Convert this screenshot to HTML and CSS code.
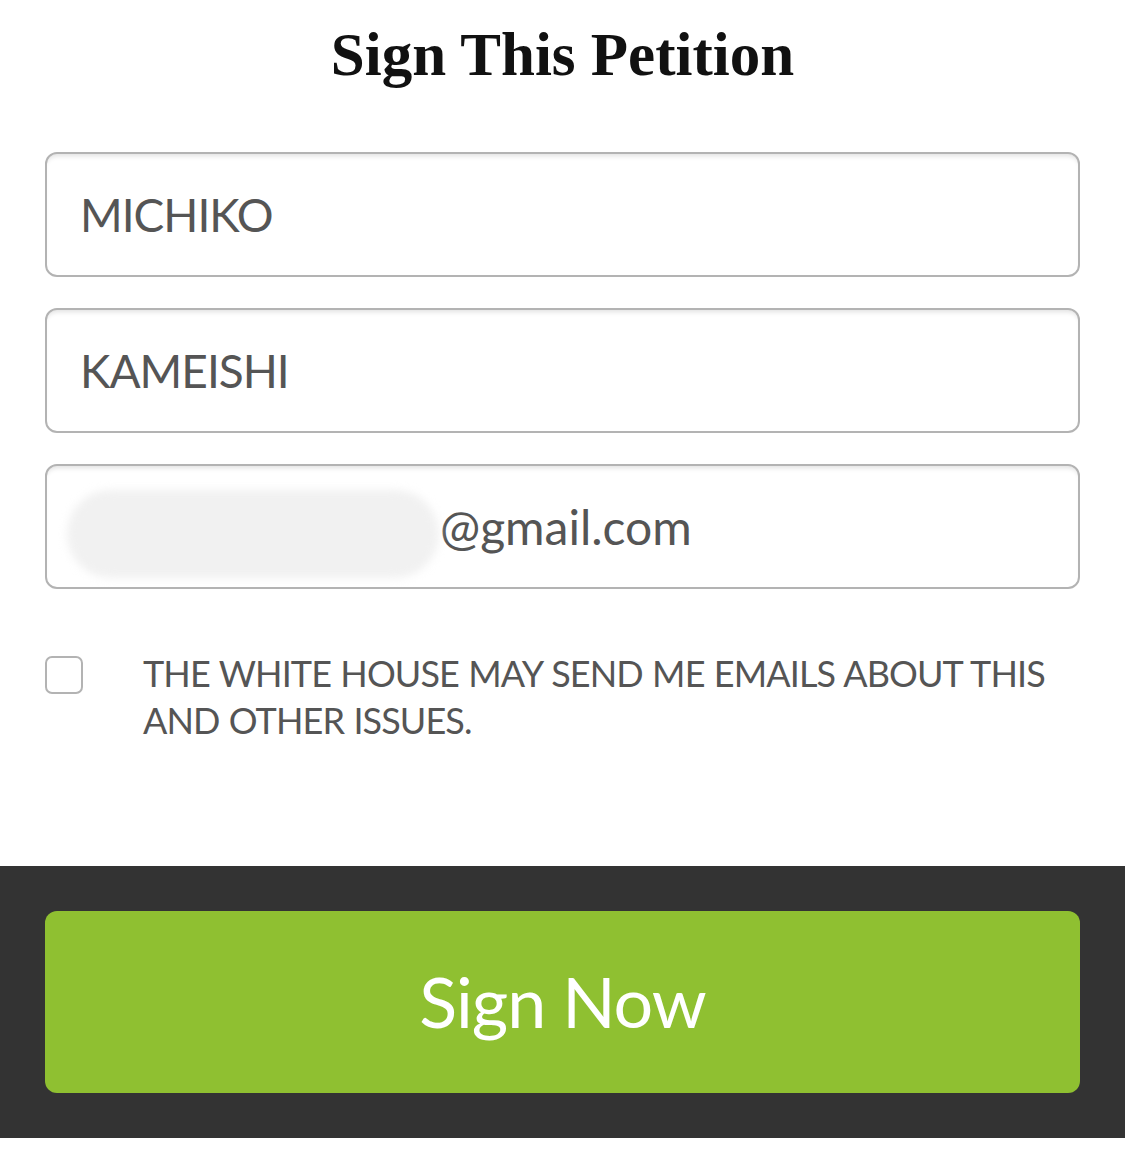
FILE: index.html
```html
<!DOCTYPE html>
<html lang="en">
<head>
  <meta charset="UTF-8" />
  <meta name="viewport" content="width=device-width, initial-scale=1.0"/>
  <title>Sign This Petition</title>
  <link rel="stylesheet" href="styles.css">
</head>
<body>

  <section class="petition">
    <h1>Sign This Petition</h1>

    <form class="sign-form">
      <div class="field">MICHIKO</div>
      <div class="field">KAMEISHI</div>
      <div class="field email">
        <span class="redacted"></span>@gmail.com
      </div>

      <label class="consent">
        <span class="checkbox"></span>
        <span class="consent-text">THE WHITE HOUSE MAY SEND ME EMAILS ABOUT THIS AND OTHER ISSUES.</span>
      </label>
    </form>
  </section>

  <footer class="sign-bar">
    <button type="button" class="sign-button">Sign Now</button>
  </footer>

</body>
</html>
```

FILE: styles.css
```css
body {
  margin: 0;
  padding: 0;
  background-color: #ffffff;
  font-family: 'Lato', 'Open Sans', sans-serif;
  color: #555555;
}

.petition {
  padding: 0 45px;
}

.petition h1 {
  margin: 0;
  padding-top: 20px;
  text-align: center;
  font-family: 'Liberation Serif', serif;
  font-weight: 700;
  font-size: 61px;
  line-height: 70px;
  color: #111111;
}

.sign-form {
  display: flex;
  flex-direction: column;
  gap: 31px;
  margin-top: 62px;
}

.field {
  height: 125px;
  box-sizing: border-box;
  border: 2.5px solid #b3b3b3;
  border-radius: 12px;
  box-shadow: inset 0 5px 5px -3px rgba(0, 0, 0, 0.12);
  padding-left: 33px;
  display: flex;
  align-items: center;
  font-size: 46px;
  letter-spacing: -1px;
  color: #555555;
}

.email {
  position: relative;
  padding-left: 393px;
  font-size: 48px;
  letter-spacing: 0;
}

.redacted {
  position: absolute;
  left: 20px;
  top: 24px;
  width: 372px;
  height: 88px;
  border-radius: 44px;
  background-color: #f1f1f1;
  filter: blur(4px);
}

.consent {
  display: flex;
  align-items: flex-start;
  gap: 60px;
  margin-top: 36px;
}

.checkbox {
  flex: 0 0 auto;
  width: 38px;
  height: 38px;
  box-sizing: border-box;
  margin-top: 0;
  border: 2.5px solid #b3b3b3;
  border-radius: 7px;
}

.consent-text {
  margin-top: -6px;
  font-size: 36px;
  line-height: 47px;
  letter-spacing: -0.9px;
  word-spacing: 1px;
  color: #555555;
}

.sign-bar {
  margin-top: 122px;
  background-color: #333333;
  padding: 45px;
}

.sign-button {
  display: block;
  width: 100%;
  height: 182px;
  border: none;
  border-radius: 12px;
  background-color: #8fc031;
  color: #ffffff;
  font-family: 'Lato', 'Open Sans', sans-serif;
  font-size: 70px;
  letter-spacing: -1px;
  padding-bottom: 4px;
  cursor: pointer;
}
```
